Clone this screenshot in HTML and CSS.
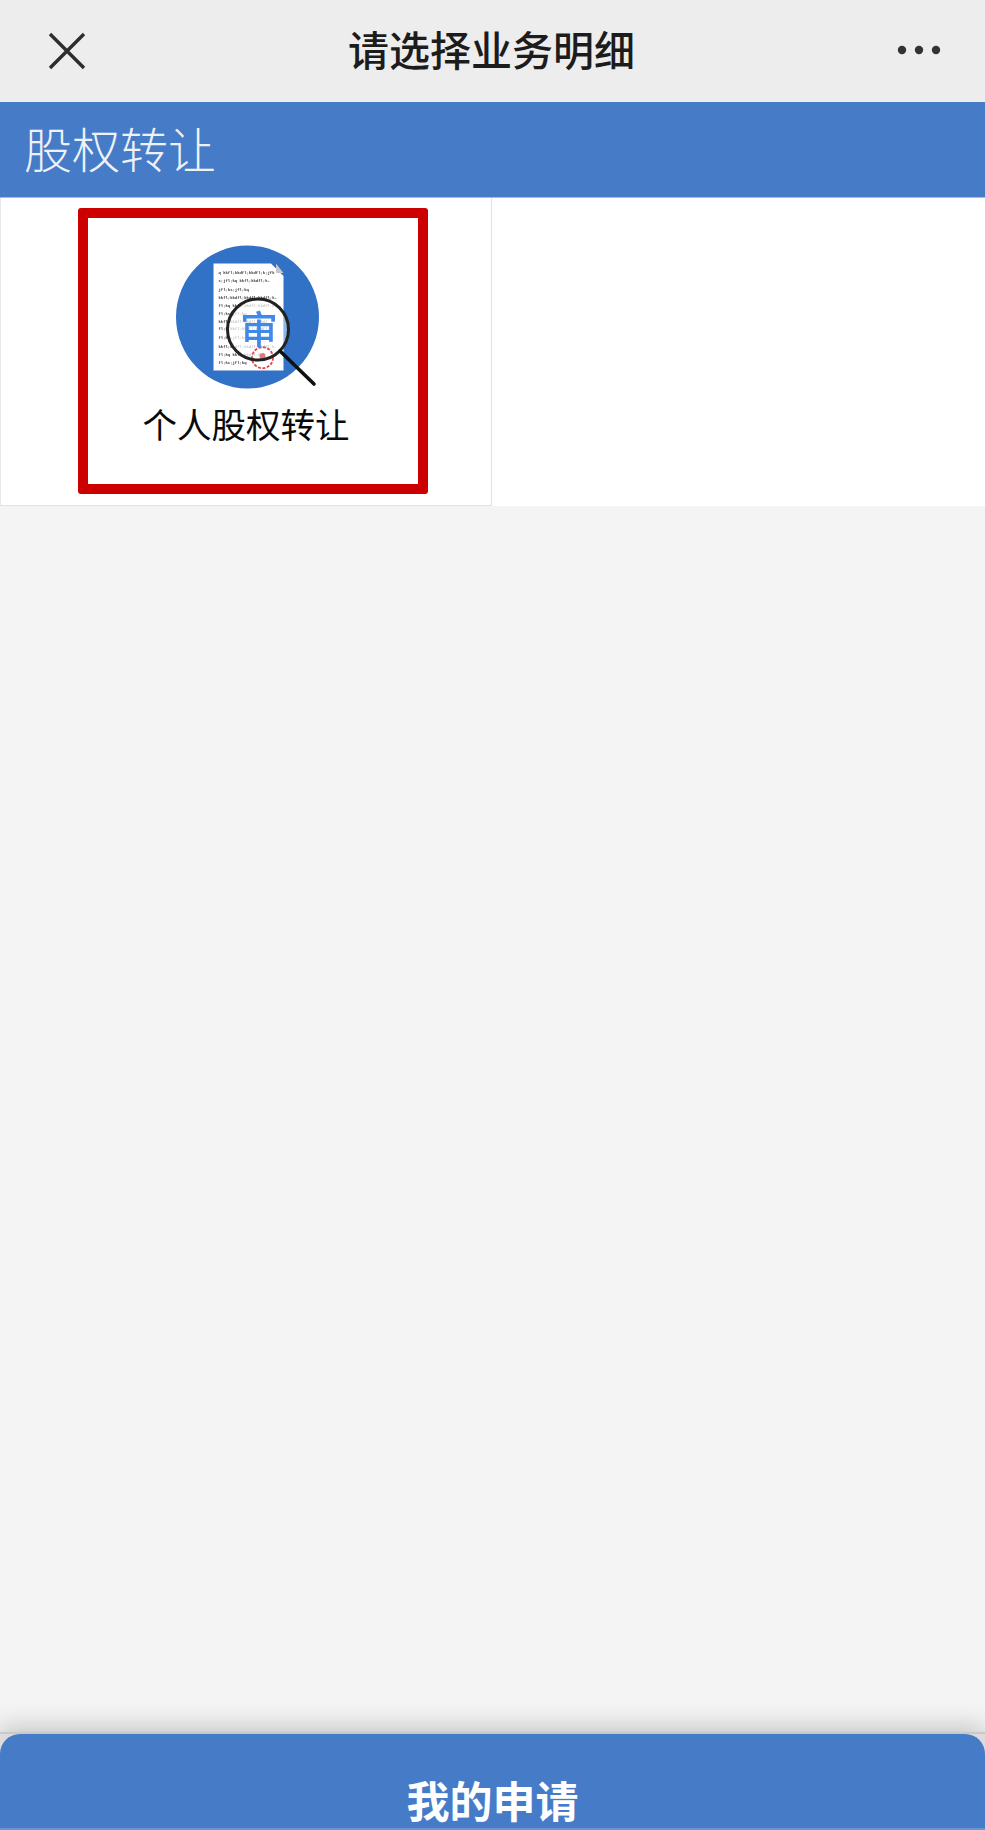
FILE: index.html
```html
<!DOCTYPE html>
<html>
<head>
    <title>请选择业务明细</title>
    <link rel="stylesheet" href="styles.css">
</head>
<body>
    <div class="top-bar">
        <svg class="top-close" width="38" height="38" viewBox="0 0 38 38">
            <path d="M2 2L36 36M36 2L2 36" stroke="#2d2d2d" stroke-width="3.4" fill="none"/>
        </svg>
        <div class="top-title">请选择业务明细</div>
        <svg class="top-more" width="44" height="10" viewBox="0 0 44 10">
            <circle cx="5" cy="5" r="4.2" fill="#333"/>
            <circle cx="22" cy="5" r="4.2" fill="#333"/>
            <circle cx="39" cy="5" r="4.2" fill="#333"/>
        </svg>
    </div>

    <div class="section-title">股权转让</div>

    <div class="biz-grid">
        <div class="biz-cell">
            <div class="biz-item">
                <svg class="biz-icon" width="160" height="160" viewBox="0 0 160 160">
                    <circle cx="81.5" cy="81" r="71.5" fill="#3171c6"/>
                    <path d="M47.500 27.500H105L117.500 40V134.500H47.500Z" fill="#fff"/>
                    <path d="M110 27.500L117.500 37H110Z" fill="#c4c7cb"/>
                    <g class="doc-text">
                        <text x="52.500" y="37.500">q kkfl;kkdfl;kkdfl;k;jfk</text>
                        <text x="52.500" y="45.800">s;jfl;kq kkfl;kkdfl;k-</text>
                        <text x="52.500" y="54.500">jfl;ks;jfl;kq</text>
                        <text x="52.500" y="62.500">kkfl;kkdfl;kkdfl;kkdfl;k-</text>
                        <text x="52.500" y="70.500">fl;kq kkfl;kkdfl;kkdfl;k</text>
                        <text x="52.500" y="78.500">fl;ks;jfl;kq</text>
                        <text x="52.500" y="86.500">kkfl;kkdfl;kkdfl;kkdf</text>
                        <text x="52.500" y="94.200">fl;k kkfl;kkdfl;kkdfl;k</text>
                        <text x="52.500" y="102.500">fl;ks;jfl;kq</text>
                        <text x="52.500" y="111.500">kkfl;kkdfl;kkdfl;kkdfl;k-</text>
                        <text x="52.500" y="119.500">fl;kq kkfl;kkdfl;k</text>
                        <text x="52.500" y="127.500">fl;ks;jfl;kq</text>
                    </g>
                    <circle cx="92" cy="93.500" r="30" fill="#fff" fill-opacity="0.72"/>
                    <path d="M117.500 77.700A30 30 0 0 1 117.500 109.300Z" fill="#8db6e3"/>
                    <circle cx="96.500" cy="121.700" r="10.500" fill="none" stroke="#e0474c" stroke-width="1.800" stroke-dasharray="3 1.500"/>
                    <circle cx="96.500" cy="120" r="3" fill="#e0777a"/>
                    <text class="doc-stamp" x="93" y="107" text-anchor="middle">审</text>
                    <circle cx="92" cy="93.500" r="30.500" fill="none" stroke="#222" stroke-width="3"/>
                    <path d="M114 115L148 148" stroke="#111" stroke-width="3.600" stroke-linecap="round"/>
                </svg>
                <div class="biz-name">个人股权转让</div>
            </div>
        </div>
        <div class="biz-empty"></div>
    </div>

    <div class="spacer"></div>

    <div class="bottom-wrap">
        <div class="bottom-bar">我的申请</div>
    </div>
</body>
</html>
```

FILE: styles.css
```css
html, body {
    margin: 0;
    padding: 0;
    height: 100%;
}
body {
    height: 1830px;
    display: flex;
    flex-direction: column;
    background-color: #f4f4f4;
    font-family: "Noto Sans CJK SC", "Liberation Sans", sans-serif;
    overflow: hidden;
}
.top-bar {
    height: 102px;
    flex: none;
    display: flex;
    align-items: center;
    justify-content: space-between;
    padding: 0 44px 0 48px;
    background-color: #ededed;
}
.top-close {
    flex: none;
}
.top-more {
    flex: none;
    margin-bottom: 2px;
}
.top-title {
    font-size: 41px;
    font-weight: 500;
    color: #1c1c1c;
    line-height: 96px;
    padding-bottom: 6px;
}
.section-title {
    height: 96px;
    flex: none;
    box-sizing: border-box;
    padding-left: 24px;
    font-size: 48px;
    font-weight: 300;
    line-height: 90px;
    color: #eef1f6;
    background-color: #467bc8;
    border-bottom: 1px solid #a3bce0;
}
.biz-grid {
    flex: none;
    display: grid;
    grid-template-columns: 492px 1fr;
    height: 308px;
    background-color: #fff;
}
.biz-cell {
    padding: 10px 0 0 78px;
    border: 1px solid #e2e2e2;
    border-top: none;
    border-left-color: #e8e8e8;
    box-sizing: border-box;
}
.biz-item {
    width: 350px;
    height: 286px;
    box-sizing: border-box;
    margin-left: -1px;
    padding: 18px 14px 0 0;
    border: 10px solid #cc0000;
    border-radius: 3px;
    display: flex;
    flex-direction: column;
    align-items: center;
}
.biz-icon {
    flex: none;
    margin-bottom: 5px;
    filter: blur(0.4px);
}
.biz-name {
    font-size: 34.500px;
    font-weight: 400;
    line-height: 44px;
    color: #0a0a0a;
}
.doc-text {
    font-family: "Liberation Mono", monospace;
    font-size: 3.900px;
    font-weight: bold;
    fill: #333;
}
.doc-stamp {
    font-family: "Noto Sans CJK SC", sans-serif;
    font-size: 38px;
    font-weight: 500;
    fill: #3f8ae8;
}
.spacer {
    flex: 1;
}
.bottom-wrap {
    height: 98px;
    flex: none;
    box-sizing: border-box;
    border-top: 2px solid #c9c9c9;
    background-color: #dcdcdc;
    box-shadow: 0 -4px 24px rgba(0, 0, 0, 0.22);
}
.bottom-bar {
    height: 96px;
    box-sizing: border-box;
    padding-top: 36px;
    text-align: center;
    font-size: 43px;
    font-weight: 700;
    line-height: 58px;
    color: #fff;
    background-color: #467bc8;
    border-bottom: 2px solid #6a95d3;
    border-radius: 20px 20px 0 0;
}
```
